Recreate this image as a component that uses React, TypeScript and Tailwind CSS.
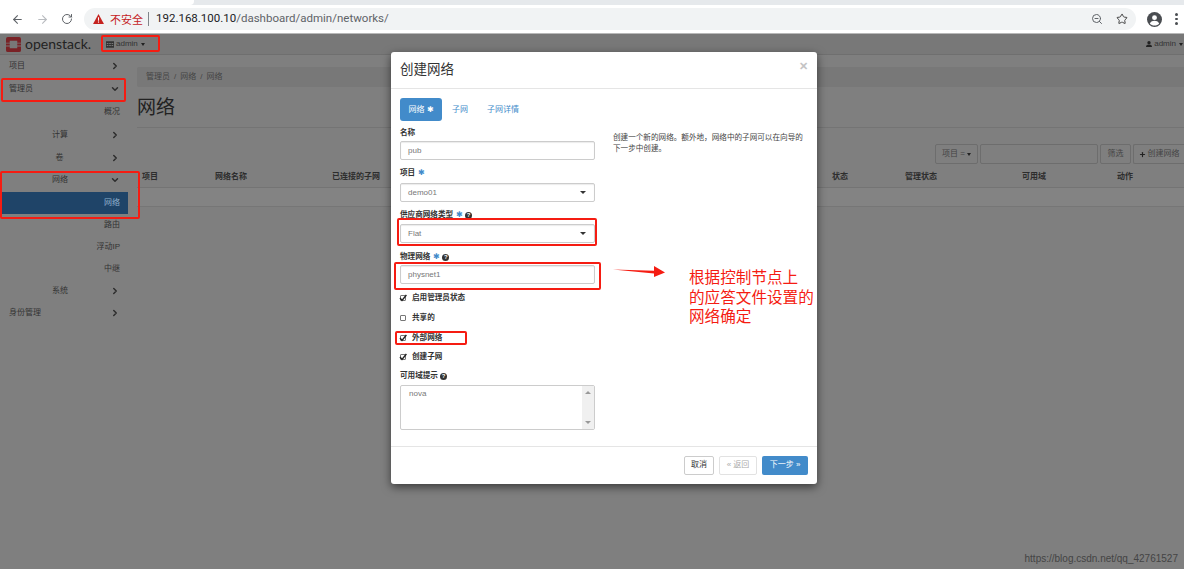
import { ArrowLeft, ArrowRight, ChevronDown, ChevronRight, Plus, RotateCw, Star, ZoomOut } from 'lucide-react';

const sans = "font-['Liberation_Sans','Noto_Sans_CJK_SC',sans-serif]";

const sideItems = [
  { label: '项目', level: 1, arrow: 'right' },
  { label: '管理员', level: 1, arrow: 'down' },
  { label: '概况', level: 3 },
  { label: '计算', level: 2, arrow: 'right' },
  { label: '卷', level: 2, arrow: 'right' },
  { label: '网络', level: 2, arrow: 'down' },
  { label: '网络', level: 3, active: true },
  { label: '路由', level: 3 },
  { label: '浮动IP', level: 3 },
  { label: '中继', level: 3 },
  { label: '系统', level: 2, arrow: 'right' },
  { label: '身份管理', level: 1, arrow: 'right' },
];

const columns = [
  { label: '项目', width: 'w-[73px]' },
  { label: '网络名称', width: 'w-[117px]' },
  { label: '已连接的子网', width: 'w-[500px]' },
  { label: '状态', width: 'w-[73px]' },
  { label: '管理状态', width: 'w-[117px]' },
  { label: '可用域', width: 'w-[95px]' },
  { label: '动作', width: 'w-[50px]' },
];

function Help() {
  return (
    <span className="ml-[2px] inline-flex h-[7px] w-[7px] items-center justify-center rounded-full bg-[#333] text-[6px] font-bold leading-none text-white">
      ?
    </span>
  );
}

function Req() {
  return <span className="ml-[3px] text-[8px] font-normal leading-none text-[#428bca]">✱</span>;
}

function Label({ children }: { children: React.ReactNode }) {
  return <div className="flex h-[10px] items-center text-[7.6px] font-bold leading-none text-[#333]">{children}</div>;
}

function Field({ value, select }: { value: string; select?: boolean }) {
  return (
    <div className="flex h-[19px] w-[195px] items-center justify-between rounded-[2px] border border-[#ccc] pl-[7px] pr-[8px] text-[8px] text-[#777] shadow-[inset_0_1px_1px_rgba(0,0,0,0.08)]">
      <span>{value}</span>
      {select && <span className="h-0 w-0 border-x-[3px] border-t-[3px] border-x-transparent border-t-[#333]" />}
    </div>
  );
}

function Check({ label, checked }: { label: string; checked?: boolean }) {
  return (
    <div className="flex h-[10px] items-center gap-[6px] text-[7.6px] font-bold leading-none text-[#333]">
      <span className="flex h-[6px] w-[6px] items-center justify-center rounded-[1px] border border-[#777] bg-white">
        {checked && (
          <svg viewBox="0 0 8 8" className="h-[8px] w-[8px] shrink-0">
            <path d="M1 4l2 2.400L7.400 1" fill="none" stroke="#222" strokeWidth="1.400" />
          </svg>
        )}
      </span>
      {label}
    </div>
  );
}

function RedBox({ className }: { className: string }) {
  return <div className={`absolute rounded-[2px] border-2 border-[#f51c12] ${className}`} />;
}

function Chrome() {
  return (
    <div className="h-[34px] shrink-0 border-b border-[#b8b8b8] bg-white">
      <div className="h-[5px] bg-[#e6e9ec]">
        <div className="h-[5px] w-[194px] rounded-br-[4px] bg-white" />
      </div>
      <div className="flex h-[28px] items-center pl-[11px] pr-[3px]">
        <ArrowLeft size={13} strokeWidth={2} className="text-[#5f6368]" />
        <ArrowRight size={13} strokeWidth={2} className="ml-[12px] text-[#b9bcc0]" />
        <RotateCw size={12} strokeWidth={2} className="ml-[12px] text-[#5f6368]" />
        <div className="ml-[11px] flex h-[22px] w-[1052px] items-center rounded-full bg-[#f1f3f4] pl-[9px] pr-[8px]">
          <svg viewBox="0 0 12 11" className="h-[10px] w-[11px] shrink-0">
            <path d="M6 0l6 11H0z" fill="#c5221f" />
            <rect x="5.400" y="3.600" width="1.200" height="3.800" fill="#fff" />
            <rect x="5.400" y="8.200" width="1.200" height="1.300" fill="#fff" />
          </svg>
          <span className="ml-[6px] text-[11px] leading-none text-[#c5221f] font-['Noto_Sans_CJK_SC',sans-serif]">不安全</span>
          <span className="ml-[5px] h-[14px] w-px bg-[#80868b]" />
          <span className="ml-[7px] whitespace-nowrap text-[11.500px] text-[#5f6368] font-['Roboto',sans-serif]">
            <span className="text-[#202124]">192.168.100.10</span>/dashboard/admin/networks/
          </span>
          <div className="ml-auto flex items-center gap-[13px]">
            <ZoomOut size={12} className="text-[#5f6368]" />
            <Star size={12} strokeWidth={2} className="text-[#444]" />
          </div>
        </div>
        <svg viewBox="0 0 16 16" className="ml-[11px] h-[15px] w-[15px] shrink-0">
          <circle cx="8" cy="8" r="8" fill="#4a4d51" />
          <circle cx="8" cy="6" r="2.600" fill="#fff" />
          <path d="M3 12.200c1-2 3-2.800 5-2.800s4 .8 5 2.800c-1.200 1.400-3 2.200-5 2.200s-3.800-.8-5-2.200z" fill="#fff" />
        </svg>
        <div className="ml-[13px] flex flex-col gap-[2px]">
          <span className="h-[2.500px] w-[2.500px] rounded-full bg-[#4a4d51]" />
          <span className="h-[2.500px] w-[2.500px] rounded-full bg-[#4a4d51]" />
          <span className="h-[2.500px] w-[2.500px] rounded-full bg-[#4a4d51]" />
        </div>
      </div>
    </div>
  );
}

function TopNav() {
  return (
    <div className="flex h-[21px] shrink-0 items-center border-b border-[#6f6f6f] bg-[#787878] pl-[6px] pr-[1px]">
      <svg viewBox="0 0 16 16" className="h-[15px] w-[15px] shrink-0">
        <path
          d="M2 0h12a2 2 0 012 2v4h-4V4H4v2H0V2a2 2 0 012-2zM0 7h4v2H0zM12 7h4v2h-4zM0 10h4v2h8v-2h4v4a2 2 0 01-2 2H2a2 2 0 01-2-2z"
          fill="#7a2226"
        />
      </svg>
      <span className="ml-[4px] w-[66px] whitespace-nowrap text-[14px] leading-none text-[#222] font-['Lato',sans-serif]">openstack.</span>
      <div className="ml-[15px] flex items-center text-[8px] text-[#333]">
        <svg viewBox="0 0 10 8" className="mr-[2px] h-[7px] w-[8px]">
          <path d="M0 0h10v8H0zM1 2v1.500h2V2zM4 2v1.500h2V2zM7 2v1.500h2V2zM1 4.500V6h2V4.500zM4 4.500V6h2V4.500zM7 4.500V6h2V4.500z" fill="#333" fillRule="evenodd" />
        </svg>
        admin
        <span className="ml-[3px] h-0 w-0 border-x-[2.500px] border-t-[3px] border-x-transparent border-t-[#222]" />
      </div>
      <div className="ml-auto flex items-center text-[8px] text-[#333]">
        <svg viewBox="0 0 8 8" className="mr-[2px] h-[6px] w-[6px]">
          <circle cx="4" cy="2.200" r="2.200" fill="#222" />
          <path d="M0 8c0-2.500 1.500-3.500 4-3.500S8 5.500 8 8z" fill="#222" />
        </svg>
        admin
        <span className="ml-[3px] h-0 w-0 border-x-[2.500px] border-t-[3px] border-x-transparent border-t-[#222]" />
      </div>
    </div>
  );
}

function Sidebar() {
  return (
    <div className="w-[128px] shrink-0 text-[8px] text-[#333]">
      {sideItems.map((item, i) => (
        <div key={i} className={`flex items-center pr-[8px] ${i < 6 ? 'h-[22.8px]' : 'h-[22px]'} ${item.active ? 'ml-[2px] bg-[#1f4468] text-[#8fb0cc]' : ''} ${item.level === 1 ? 'pl-[9px]' : ''} ${item.level === 2 ? 'pl-[52px]' : ''}`}>
          {item.level === 2 ? <span className="w-[15px] whitespace-nowrap text-center">{item.label}</span> : null}
          {item.level === 1 ? <span>{item.label}</span> : null}
          {item.level === 3 ? <span className="ml-auto">{item.label}</span> : null}
          {item.arrow === 'right' && <ChevronRight size={10} strokeWidth={3.500} className="ml-auto text-[#2d2d2d]" />}
          {item.arrow === 'down' && <ChevronDown size={10} strokeWidth={3.500} className="ml-auto text-[#2d2d2d]" />}
        </div>
      ))}
    </div>
  );
}

function MainArea() {
  return (
    <div className="min-w-0 flex-1 pl-[9px] pt-[12px]">
      <div className="flex h-[20px] items-center gap-[4px] rounded-l-[2px] bg-[#787878] pl-[9px] text-[8px] text-[#444]">
        <span>管理员</span>
        <span>/</span>
        <span>网络</span>
        <span>/</span>
        <span>网络</span>
      </div>
      <div className="h-[41px] border-b border-[#747474] pt-[7px] text-[19px] leading-[28px] text-[#222]">网络</div>
      <div className="mt-[16px] flex h-[20px] justify-end gap-[2px] text-[8px] text-[#444]">
        <div className="flex w-[43px] items-center justify-center gap-[2px] rounded-[2px] border border-[#6d6d6d]">
          项目 =<span className="h-0 w-0 border-x-[2.500px] border-t-[3px] border-x-transparent border-t-[#222]" />
        </div>
        <div className="w-[118px] rounded-[2px] border border-[#6d6d6d]" />
        <div className="flex w-[31px] items-center justify-center rounded-[2px] border border-[#6d6d6d]">筛选</div>
        <div className="flex w-[51px] items-center justify-center gap-[2px] whitespace-nowrap rounded-l-[2px] border border-r-0 border-[#6d6d6d]">
          <Plus size={7} strokeWidth={4} className="text-[#222]" />
          创建网络
        </div>
      </div>
      <div className="mt-[2px] flex h-[22px] items-center border-b border-[#747474] pl-[5px] text-[8px] font-bold text-[#2d2d2d]">
        {columns.map((c) => (
          <span key={c.label} className={`${c.width} shrink-0`}>{c.label}</span>
        ))}
      </div>
      <div className="h-[19px] border-b border-[#767676] bg-[#838383]" />
    </div>
  );
}

function Modal() {
  return (
    <div className="absolute left-[391px] top-[52px] h-[432px] w-[426px] rounded-[3px] bg-white shadow-[0_3px_10px_rgba(0,0,0,0.55)]">
      <div className="relative flex h-[37px] items-center border-b border-[#e5e5e5] pl-[9px] text-[13.500px] text-[#333]">
        创建网络
        <span className="absolute right-[9px] top-[9px] text-[11px] font-bold leading-none text-[#c4c4c4]">✕</span>
      </div>
      <div className="flex h-[358px] border-b border-[#e5e5e5] pl-[9px] pt-[9px]">
        <div className="w-[195px]">
          <div className="flex h-[23px] items-center text-[8px] text-[#428bca]">
            <span className="flex h-[23px] w-[42px] items-center justify-center rounded-[3px] bg-[#428bca] text-white">
              网络<span className="ml-[2px] text-[8px] leading-none">✱</span>
            </span>
            <span className="ml-[10px]">子网</span>
            <span className="ml-[19px]">子网详情</span>
          </div>
          <div className="mt-[7px]"><Label>名称</Label></div>
          <div className="mt-[3px]"><Field value="pub" /></div>
          <div className="mt-[8px]"><Label>项目<Req /></Label></div>
          <div className="mt-[5px]"><Field value="demo01" select /></div>
          <div className="mt-[8px]"><Label>供应商网络类型<Req /><Help /></Label></div>
          <div className="mt-[4px]"><Field value="Flat" select /></div>
          <div className="mt-[9px]"><Label>物理网络<Req /><Help /></Label></div>
          <div className="mt-[3px]"><Field value="physnet1" /></div>
          <div className="mt-[9px]"><Check label="启用管理员状态" checked /></div>
          <div className="mt-[10px]"><Check label="共享的" /></div>
          <div className="mt-[10px]"><Check label="外部网络" checked /></div>
          <div className="mt-[9px]"><Check label="创建子网" checked /></div>
          <div className="mt-[9px]"><Label>可用域提示<Help /></Label></div>
          <div className="mt-[4px] flex h-[45px] rounded-[2px] border border-[#ccc] text-[8px] text-[#777]">
            <div className="flex-1 pl-[8px] pt-[2px]">nova</div>
            <div className="flex w-[12px] flex-col items-center justify-between bg-[#f0f0f0] py-[5px]">
              <span className="h-0 w-0 border-x-[3px] border-b-[3px] border-x-transparent border-b-[#999]" />
              <span className="h-0 w-0 border-x-[3px] border-t-[3px] border-x-transparent border-t-[#999]" />
            </div>
          </div>
        </div>
        <div className="ml-[18px] w-[192px] pt-[34px] text-[7.600px] leading-[11px] text-[#444]">
          {'创建一个新的网络。额外地\uFF0C网络中的子网可以在向导的'}
          <br />
          下一步中创建。
        </div>
      </div>
      <div className="flex h-[36px] items-center justify-end gap-[5px] pr-[9px] text-[8px]">
        <span className="flex h-[19px] w-[30px] items-center justify-center rounded-[2px] border border-[#ccc] text-[#333]">取消</span>
        <span className="flex h-[19px] w-[38px] items-center justify-center gap-[3px] rounded-[2px] border border-[#e2e2e2] text-[#aaa]">« 返回</span>
        <span className="flex h-[19px] w-[46px] items-center justify-center gap-[3px] rounded-[2px] bg-[#428bca] text-white">下一步 »</span>
      </div>
    </div>
  );
}

export default function App() {
  return (
    <div className={`relative flex h-[569px] w-[1184px] flex-col overflow-hidden bg-[#7f7f7f] ${sans}`}>
      <Chrome />
      <TopNav />
      <div className="flex flex-1">
        <Sidebar />
        <MainArea />
      </div>
      <Modal />

      <RedBox className="left-[101px] top-[35px] h-[17px] w-[59px]" />
      <RedBox className="left-[1px] top-[78px] h-[24px] w-[125px]" />
      <RedBox className="left-0 top-[171px] h-[48px] w-[140px]" />
      <RedBox className="left-[397px] top-[218px] h-[28px] w-[200px]" />
      <RedBox className="left-[394px] top-[262px] h-[28px] w-[207px]" />
      <RedBox className="left-[395px] top-[331px] h-[14px] w-[72px]" />

      <svg viewBox="0 0 54 14" className="absolute left-[612px] top-[265px] h-[14px] w-[54px]">
        <path d="M1 4.500l41 1.200V1l11 6.500L42 12V8.500z" fill="#f51c12" />
      </svg>
      <div className="absolute left-[689px] top-[267px] w-[130px] text-[15.600px] leading-[19.500px] text-[#f51c12] font-['Noto_Sans_CJK_SC',sans-serif]">
        根据控制节点上
        <br />
        的应答文件设置的
        <br />
        网络确定
      </div>
      <div className="absolute bottom-[5px] right-[6px] text-[10px] leading-none text-[#444] font-['Liberation_Sans',sans-serif]">
        https://blog.csdn.net/qq_42761527
      </div>
    </div>
  );
}
